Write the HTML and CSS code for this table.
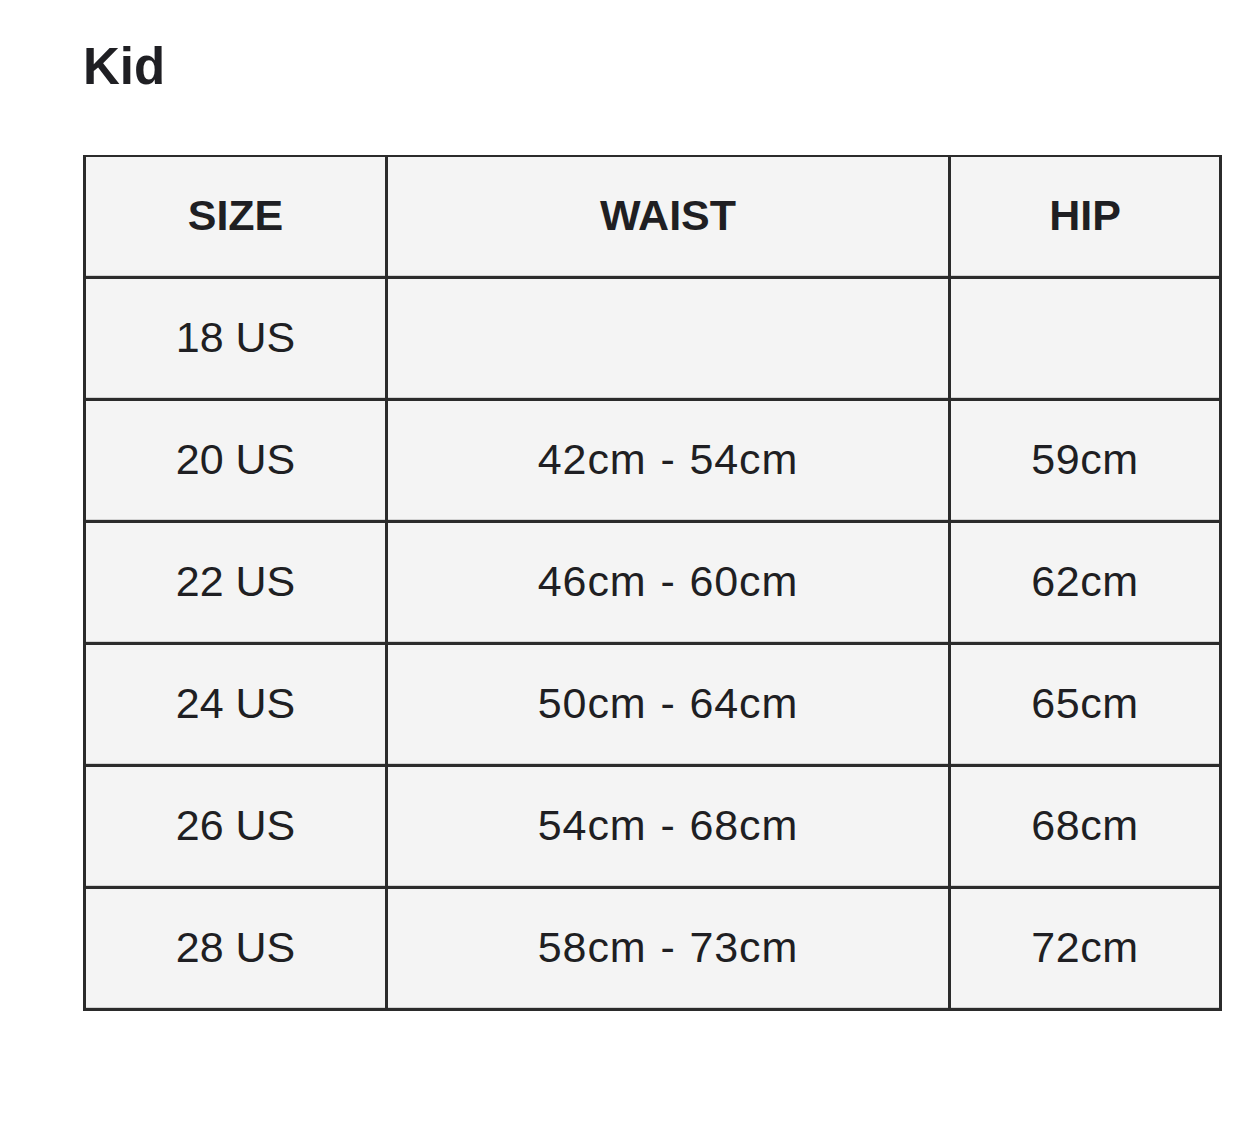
FILE: index.html
```html
<!DOCTYPE html>
<html lang="en">
<head>
<meta charset="utf-8">
<title>Kid size chart</title>
<link rel="stylesheet" href="styles.css">
</head>
<body>
<div class="page">
  <h2 class="title">Kid</h2>
  <table class="chart">
    <colgroup>
      <col class="c-size">
      <col class="c-waist">
      <col class="c-hip">
    </colgroup>
    <thead>
      <tr><th>SIZE</th><th>WAIST</th><th>HIP</th></tr>
    </thead>
    <tbody>
      <tr><td>18 US</td><td class="w"></td><td class="h"></td></tr>
      <tr><td>20 US</td><td class="w">42cm - 54cm</td><td class="h">59cm</td></tr>
      <tr><td>22 US</td><td class="w">46cm - 60cm</td><td class="h">62cm</td></tr>
      <tr><td>24 US</td><td class="w">50cm - 64cm</td><td class="h">65cm</td></tr>
      <tr><td>26 US</td><td class="w">54cm - 68cm</td><td class="h">68cm</td></tr>
      <tr><td>28 US</td><td class="w">58cm - 73cm</td><td class="h">72cm</td></tr>
    </tbody>
  </table>
</div>
</body>
</html>
```

FILE: styles.css
```css
html, body {
  margin: 0;
  padding: 0;
  background: #ffffff;
}

body {
  font-family: "Liberation Sans", Arial, Helvetica, sans-serif;
  color: #1f1f23;
}

.page {
  padding: 37px 0 0 83px;
}

.title {
  margin: 0;
  font-size: 51px;
  font-weight: 700;
  line-height: 60px;
  letter-spacing: 0;
}

.chart {
  margin-top: 58px;
  width: 1139px;
  border-collapse: separate;
  border-spacing: 0;
  table-layout: fixed;
  border-left: 3px solid #2b2b2b;
  border-top: 2px solid #2b2b2b;
}

.c-size { width: 302px; }
.c-waist { width: 563px; }
.c-hip { width: 271px; }

.chart th,
.chart td {
  box-sizing: border-box;
  height: 122px;
  padding: 0 0 3px;
  text-align: center;
  vertical-align: middle;
  background: #f4f4f4;
  border-right: 3px solid #2b2b2b;
  border-bottom: 3px solid #2b2b2b;
  box-shadow: inset 0 -1px 0 #d2d2d2;
  font-size: 43px;
  line-height: 50px;
}

.chart thead th {
  font-weight: 700;
}

.chart tbody td {
  font-weight: 400;
}

.chart td.w {
  letter-spacing: 0.9px;
  word-spacing: 1px;
}

.chart td.h {
  letter-spacing: 0.6px;
}
```
